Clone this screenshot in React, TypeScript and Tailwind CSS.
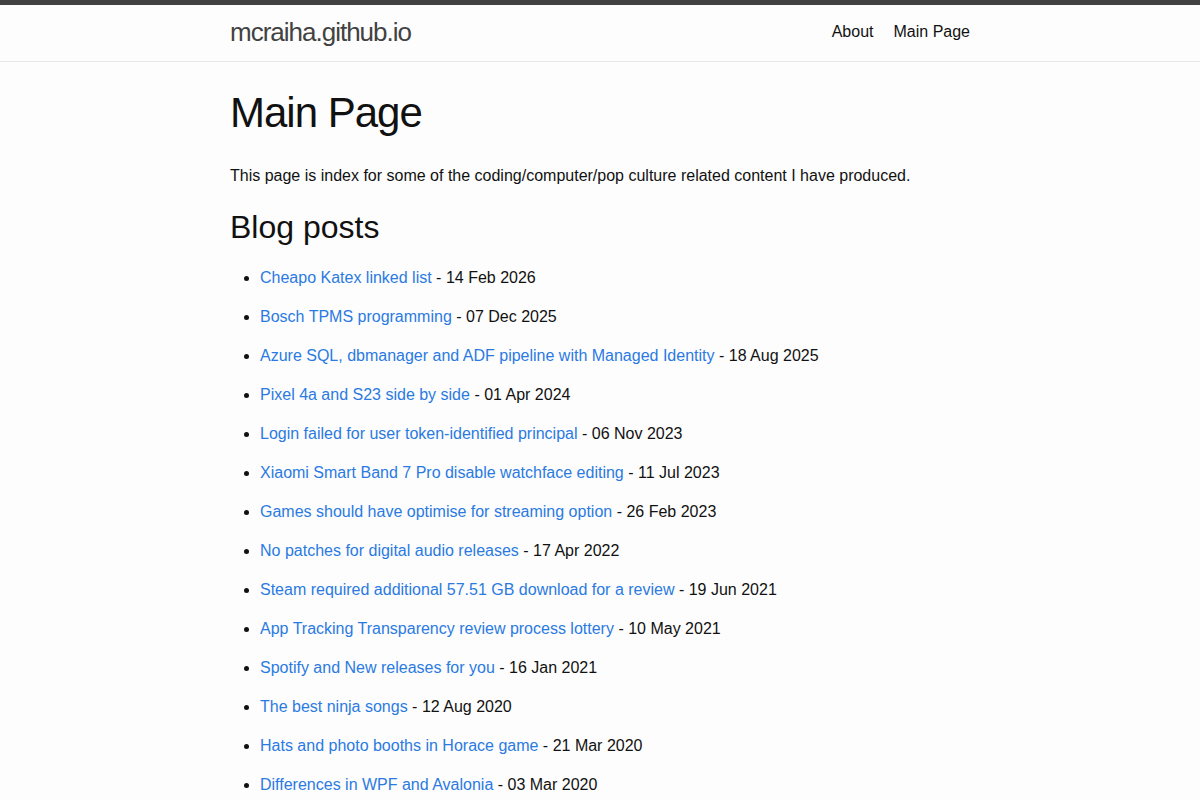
import React from "react";

const posts: [string, string][] = [
  ["Cheapo Katex linked list", "14 Feb 2026"],
  ["Bosch TPMS programming", "07 Dec 2025"],
  ["Azure SQL, dbmanager and ADF pipeline with Managed Identity", "18 Aug 2025"],
  ["Pixel 4a and S23 side by side", "01 Apr 2024"],
  ["Login failed for user token-identified principal", "06 Nov 2023"],
  ["Xiaomi Smart Band 7 Pro disable watchface editing", "11 Jul 2023"],
  ["Games should have optimise for streaming option", "26 Feb 2023"],
  ["No patches for digital audio releases", "17 Apr 2022"],
  ["Steam required additional 57.51 GB download for a review", "19 Jun 2021"],
  ["App Tracking Transparency review process lottery", "10 May 2021"],
  ["Spotify and New releases for you", "16 Jan 2021"],
  ["The best ninja songs", "12 Aug 2020"],
  ["Hats and photo booths in Horace game", "21 Mar 2020"],
  ["Differences in WPF and Avalonia", "03 Mar 2020"],
];

export default function App() {
  return (
    <div
      className="min-h-screen bg-[#fdfdfd] text-[#111111] text-[16px] leading-[1.5]"
      style={{ fontFamily: '"Liberation Sans", Arial, Helvetica, sans-serif' }}
    >
      <header className="border-t-[5px] border-t-[#424242] border-b border-b-[#e8e8e8]">
        <div className="max-w-[800px] mx-auto px-[30px] h-[56px] flex justify-between items-start">
          <a className="text-[26px] leading-[54px] tracking-[-1px] text-[#424242]" href="#">
            mcraiha.github.io
          </a>
          <nav className="flex gap-[20px] leading-[54px] text-[#111111]">
            <a href="#">About</a>
            <a href="#">Main Page</a>
          </nav>
        </div>
      </header>
      <main className="max-w-[800px] mx-auto px-[30px] pt-[30px]">
        <h1 className="text-[42px] leading-none tracking-[-1px] mb-[30px]">Main Page</h1>
        <p className="mb-[15px]">
          This page is index for some of the coding/computer/pop culture related content I have produced.
        </p>
        <h2 className="text-[32px] leading-[1.5] mb-[15px]">Blog posts</h2>
        <ul className="list-disc ml-[30px]">
          {posts.map(([t, d]) => (
            <li key={t}>
              <p className="mb-[15px]">
                <a href="#" className="text-[#2a7ae2]">
                  {t}
                </a>{" "}
                - {d}
              </p>
            </li>
          ))}
        </ul>
      </main>
    </div>
  );
}
